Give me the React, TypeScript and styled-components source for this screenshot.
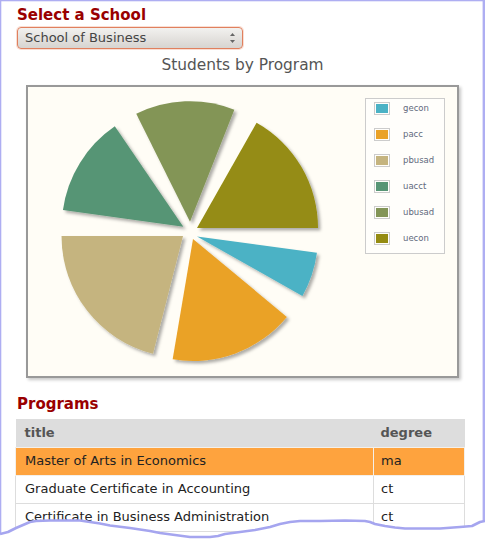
import React from "react";
import styled, { createGlobalStyle } from "styled-components";

const Global = createGlobalStyle`
  html, body { margin: 0; padding: 0; background: #fff; }
  body { font-family: "DejaVu Sans", Verdana, sans-serif; }
`;

const Page = styled.div`
  position: relative;
  width: 485px;
  height: 542px;
  overflow: hidden;
  background: #fff;
`;

const Content = styled.div`
  display: flex;
  flex-direction: column;
  align-items: flex-start;
  padding: 6px 0 0 17px;
`;

const Heading = styled.h2<{ $mt?: number }>`
  margin: ${(p) => p.$mt ?? 0}px 0 0 0;
  font-size: 15px;
  line-height: 18px;
  font-weight: bold;
  color: #990000;
`;

const SelectBox = styled.div`
  margin-top: 3px;
  box-sizing: border-box;
  width: 226px;
  height: 22px;
  border: 1px solid #e0805e;
  border-radius: 4px;
  box-shadow: 0 0 0 1px rgba(240, 160, 130, 0.35);
  background: linear-gradient(#f2f1ef, #d7d4d0);
  display: flex;
  align-items: center;
  justify-content: space-between;
  padding: 0 6px 0 7px;
  font-size: 13px;
  line-height: 20px;
  color: #444;
`;

const ChartBlock = styled.div`
  width: 450px;
  margin-top: 7px;
  display: flex;
  flex-direction: column;
`;

const ChartTitle = styled.div`
  text-align: center;
  font-size: 15.4px;
  line-height: 18px;
  color: #555;
  padding-left: 1px;
`;

const Frame = styled.div`
  margin: 11px 0 0 9px;
  box-sizing: border-box;
  width: 433px;
  height: 293px;
  border: 2px solid #999;
  background: #fffdf6;
  box-shadow: 2px 2px 3px rgba(0, 0, 0, 0.22);
  display: flex;
  align-items: flex-start;
`;

const Legend = styled.div`
  margin-top: 11px;
  box-sizing: border-box;
  width: 80px;
  border: 1px solid #ccc;
  background: rgba(255, 255, 255, 0.6);
  display: flex;
  flex-direction: column;
  gap: 13px;
  padding: 2.7px 0 8px 8px;
`;

const LegendRow = styled.div`
  display: flex;
  align-items: center;
  height: 13px;
  gap: 13px;
`;

const Swatch = styled.div<{ $c: string }>`
  box-sizing: border-box;
  width: 16px;
  height: 13px;
  border: 1px solid #ccc;
  padding: 1px;
  &::after {
    content: "";
    display: block;
    width: 100%;
    height: 100%;
    background: ${(p) => p.$c};
  }
`;

const LegendLabel = styled.span`
  font-size: 8.5px;
  color: #626a7d;
`;

const Table = styled.table`
  margin: 6px 0 0 -2px;
  width: 450px;
  border-collapse: collapse;
  font-size: 13px;
  color: #222;
`;

const Th = styled.th<{ $w?: number; $pl?: number }>`
  background: #ddd;
  color: #555;
  font-weight: bold;
  text-align: left;
  height: 28px;
  padding: 0 0 1px ${(p) => p.$pl ?? 9}px;
  box-sizing: border-box;
  width: ${(p) => (p.$w ? `${p.$w}px` : "auto")};
`;

const Td = styled.td<{ $hl?: boolean; $pl?: number }>`
  height: 28px;
  box-sizing: border-box;
  padding: 0 0 2px ${(p) => p.$pl ?? 9}px;
  border: 1px solid ${(p) => (p.$hl ? "#f4f0ea" : "#ddd")};
  background: ${(p) => (p.$hl ? "#fea33e" : "#fff")};
`;

const Overlay = styled.svg`
  position: absolute;
  left: 0;
  top: 0;
  pointer-events: none;
`;

type Slice = { name: string; color: string; tip: [number, number]; a0: number; a1: number; r: number };

const slices: Slice[] = [
  { name: "gecon", color: "#4bb2c5", tip: [197, 236.5], a0: 7.7, a1: 29.4, r: 121 },
  { name: "pacc", color: "#eaa228", tip: [193, 239], a0: 39.7, a1: 99.6, r: 122 },
  { name: "pbusad", color: "#c5b47f", tip: [183, 236], a0: 104.3, a1: 180, r: 121.5 },
  { name: "uacct", color: "#579575", tip: [183.3, 226.7], a0: 187.9, a1: 235.7, r: 121.5 },
  { name: "ubusad", color: "#839557", tip: [190, 221.7], a0: 243.5, a1: 291.6, r: 120.5 },
  { name: "uecon", color: "#958c12", tip: [197, 228], a0: 299.5, a1: 360, r: 121 },
];

const slicePath = (s: Slice) => {
  const [x, y] = s.tip;
  const rad = (d: number) => (d * Math.PI) / 180;
  const x0 = x + s.r * Math.cos(rad(s.a0));
  const y0 = y + s.r * Math.sin(rad(s.a0));
  const x1 = x + s.r * Math.cos(rad(s.a1));
  const y1 = y + s.r * Math.sin(rad(s.a1));
  return `M${x},${y} L${x0.toFixed(2)},${y0.toFixed(2)} A${s.r},${s.r} 0 0 1 ${x1.toFixed(2)},${y1.toFixed(2)} Z`;
};

const Pie = () => (
  <svg width={337} height={289} viewBox="28 87 337 289">
    <defs>
      <filter id="sh" x="-20%" y="-20%" width="140%" height="140%">
        <feDropShadow dx="2.5" dy="2.5" stdDeviation="1.4" floodColor="#000" floodOpacity="0.32" />
      </filter>
    </defs>
    {slices.map((s) => (
      <path key={s.name} d={slicePath(s)} fill={s.color} filter="url(#sh)" />
    ))}
  </svg>
);

const Arrows = () => (
  <svg width="7" height="12" viewBox="0 0 7 12">
    <path d="M3.5 1 L6 4 L1 4 Z" fill="#666" />
    <path d="M3.5 11 L6 8 L1 8 Z" fill="#666" />
  </svg>
);

const wave: [number, number][] = [
  [0, 534], [8, 532], [16, 528], [23, 525], [30, 522], [36, 521], [50, 520.5], [80, 520.5],
  [90, 522], [100, 523.5], [110, 525.5], [130, 528], [150, 531], [160, 533], [175, 535],
  [190, 537], [210, 537], [218, 536], [225, 534], [240, 532], [255, 530], [270, 527],
  [280, 524], [290, 522], [300, 521], [320, 521], [345, 520.5], [365, 521], [370, 522],
  [375, 524], [385, 526], [395, 527.5], [405, 528.5], [440, 528.5], [460, 527], [472, 526],
  [476, 524], [480, 522], [485, 521],
];

const wavePts = wave.map(([x, y]) => `${x},${y}`).join(" ");

const rows = [
  { title: "Master of Arts in Economics", degree: "ma", hl: true },
  { title: "Graduate Certificate in Accounting", degree: "ct" },
  { title: "Certificate in Business Administration", degree: "ct" },
];

export default function App() {
  return (
    <Page>
      <Global />
      <Content>
        <Heading>Select a School</Heading>
        <SelectBox>
          <span>School of Business</span>
          <Arrows />
        </SelectBox>
        <ChartBlock>
          <ChartTitle>Students by Program</ChartTitle>
          <Frame>
            <Pie />
            <Legend>
              {slices.map((s) => (
                <LegendRow key={s.name}>
                  <Swatch $c={s.color} />
                  <LegendLabel>{s.name}</LegendLabel>
                </LegendRow>
              ))}
            </Legend>
          </Frame>
        </ChartBlock>
        <Heading $mt={17}>Programs</Heading>
        <Table>
          <thead>
            <tr>
              <Th>title</Th>
              <Th $w={91} $pl={7}>degree</Th>
            </tr>
          </thead>
          <tbody>
            {rows.map((r) => (
              <tr key={r.title}>
                <Td $hl={r.hl}>{r.title}</Td>
                <Td $hl={r.hl} $pl={7}>{r.degree}</Td>
              </tr>
            ))}
          </tbody>
        </Table>
      </Content>
      <Overlay width={485} height={542} viewBox="0 0 485 542">
        <polygon points={`${wavePts} 485,542 0,542`} fill="#fff" />
        <rect x="0" y="0" width="485" height="1.3" fill="#aeaef2" />
        <rect x="0" y="0" width="1.3" height="534" fill="#aeaef2" />
        <rect x="482.6" y="0" width="2.4" height="522" fill="#aeaef2" />
        <polyline points={wavePts} fill="none" stroke="#a5a5ef" strokeWidth="2.6" strokeLinejoin="round" />
      </Overlay>
    </Page>
  );
}
